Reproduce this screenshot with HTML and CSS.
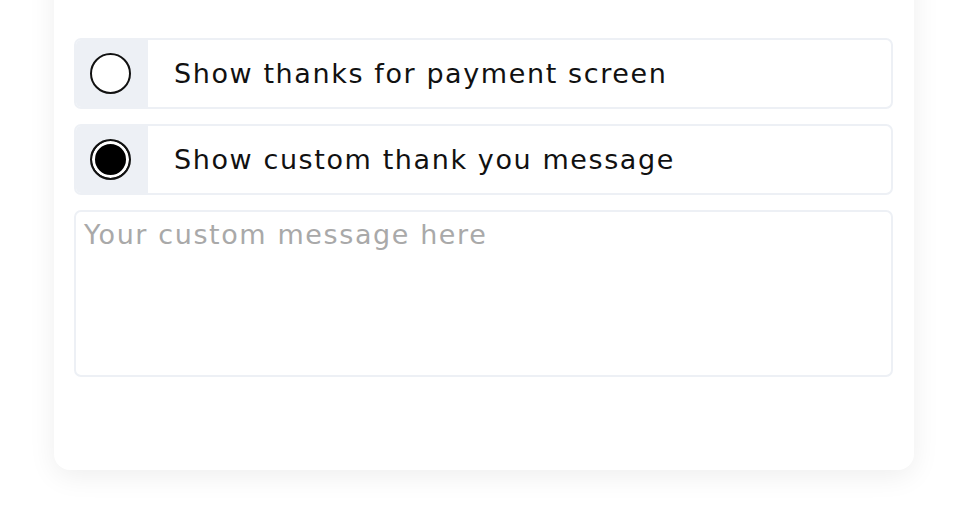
FILE: index.html
```html
<!DOCTYPE html>
<html>
<head>
<meta charset="utf-8">
<link rel="stylesheet" href="styles.css">
</head>
<body>
<div class="card">
  <label class="option">
    <span class="radio-cell"><span class="radio"></span></span>
    <span class="label">Show thanks for payment screen</span>
  </label>
  <label class="option">
    <span class="radio-cell"><span class="radio checked"></span></span>
    <span class="label">Show custom thank you message</span>
  </label>
  <textarea class="message" placeholder="Your custom message here"></textarea>
</div>
</body>
</html>
```
FILE: styles.css
```css
html, body {
  margin: 0;
  padding: 0;
  background: #ffffff;
}
body {
  font-family: "DejaVu Sans", sans-serif;
  height: 524px;
  overflow: hidden;
}
.card {
  box-sizing: border-box;
  width: 860px;
  margin: -40px 0 0 54px;
  padding: 78px 21px 93px 20px;
  background: #ffffff;
  border-radius: 0 0 16px 16px;
  box-shadow: 0 6px 28px rgba(0, 0, 0, 0.07);
  display: flex;
  flex-direction: column;
  gap: 15px;
}
.option {
  box-sizing: border-box;
  height: 71px;
  display: flex;
  align-items: stretch;
  border: 2px solid #edf0f5;
  border-radius: 7px;
  overflow: hidden;
}
.radio-cell {
  box-sizing: border-box;
  width: 72px;
  flex: none;
  padding-right: 4px;
  background: #edf0f5;
  display: flex;
  align-items: center;
  justify-content: center;
}
.radio {
  box-sizing: border-box;
  width: 41px;
  height: 41px;
  border-radius: 50%;
  border: 2px solid #111;
  background: #fff;
}
.radio.checked {
  background: #000;
  box-shadow: inset 0 0 0 3px #fff;
}
.label {
  display: flex;
  align-items: center;
  padding-left: 26px;
  font-size: 27px;
  letter-spacing: 1.6px;
  color: #111;
}
.message {
  box-sizing: border-box;
  height: 167px;
  margin: 0;
  border: 2px solid #edf0f5;
  border-radius: 7px;
  padding: 7px 8px;
  font-family: inherit;
  font-size: 27px;
  letter-spacing: 1.6px;
  resize: none;
  outline: none;
}
.message::placeholder {
  color: #a9a9a9;
}
```
